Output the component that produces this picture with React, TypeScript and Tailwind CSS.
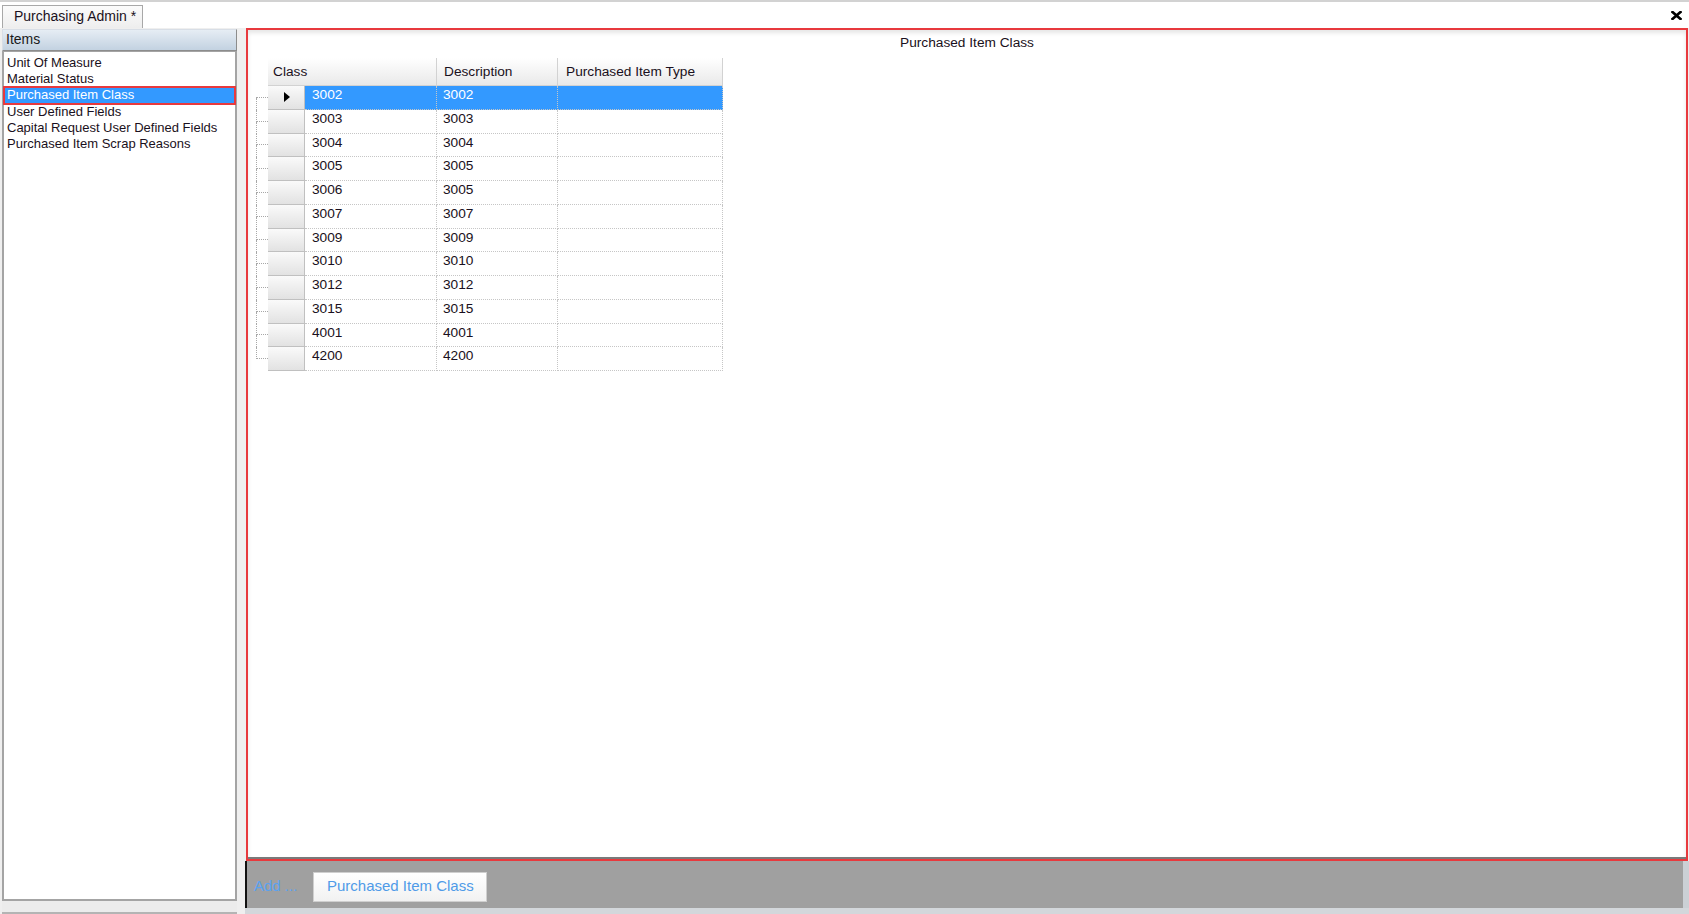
const menuItems = [
  'Unit Of Measure',
  'Material Status',
  'Purchased Item Class',
  'User Defined Fields',
  'Capital Request User Defined Fields',
  'Purchased Item Scrap Reasons',
];

const rows = [
  ['3002', '3002'],
  ['3003', '3003'],
  ['3004', '3004'],
  ['3005', '3005'],
  ['3006', '3005'],
  ['3007', '3007'],
  ['3009', '3009'],
  ['3010', '3010'],
  ['3012', '3012'],
  ['3015', '3015'],
  ['4001', '4001'],
  ['4200', '4200'],
];

function CloseIcon() {
  return (
    <svg width="11" height="9" viewBox="0 0 11 9" className="self-start mt-[9px] mr-[7px]">
      <path d="M1.5 1 L9.5 8 M9.5 1 L1.5 8" stroke="#000" strokeWidth="2.6" strokeLinecap="square" />
    </svg>
  );
}

function ItemList() {
  return (
    <div className="w-[237px] flex flex-col pl-[2px] mt-[1px]">
      <div className="h-[22px] flex items-center pl-[3px] pb-[1px] text-[14px] text-[#1a1a1a] border border-[#8c8c8c] border-t-[#d8dee6] border-l-[#d8dee6] bg-gradient-to-b from-[#e6edf4] to-[#c3d2e1]">
        Items
      </div>
      <ul className="flex-1 bg-white border-2 border-t border-[#a4a4a4] pt-[3px] text-[13px] leading-[16.2px]">
        {menuItems.map((item) =>
          item === 'Purchased Item Class' ? (
            <li
              key={item}
              className="pl-[3px] bg-[#3399ff] text-white outline-2 outline-[#e8393d] -outline-offset-1"
            >
              {item}
            </li>
          ) : (
            <li key={item} className="pl-[3px] text-[#1a1020]">
              {item}
            </li>
          )
        )}
      </ul>
      <div className="h-[13px] bg-[#ececec] border-b-2 border-[#b4b4b4]" />
    </div>
  );
}

function Connector({ first, last }: { first: boolean; last: boolean }) {
  return (
    <div className="w-[12px] flex flex-col">
      <div
        className={
          'h-1/2 border-b border-dotted border-[#a8a8a8] ' +
          (first ? '' : 'border-l')
        }
      />
      <div className={'h-1/2 border-dotted border-[#a8a8a8] ' + (last ? '' : 'border-l')} />
    </div>
  );
}

function Grid() {
  return (
    <div className="flex flex-col pl-[8px] mt-[6px] text-[13.7px]">
      <div className="ml-[12px] flex h-[28px] text-[#1a1020]">
        <div className="w-[169px] flex items-center pl-[5px] pt-[1px] bg-gradient-to-b from-white to-[#e9e9e9] border-r border-b border-[#d2d2d2]">
          Class
        </div>
        <div className="w-[121px] flex items-center pl-[7px] pt-[1px] bg-gradient-to-b from-white to-[#e9e9e9] border-r border-b border-[#d2d2d2]">
          Description
        </div>
        <div className="w-[165px] flex items-center pl-[8px] pt-[1px] bg-gradient-to-b from-white to-[#e9e9e9] border-r border-b border-[#d2d2d2]">
          Purchased Item Type
        </div>
      </div>
      {rows.map(([cls, desc], i) => {
        const selected = i === 0;
        const cell =
          'pt-[1px] leading-[16px] border-r border-b border-dotted border-[#c6c6c6] ' +
          (selected ? 'bg-[#3399ff] text-white' : 'bg-white text-[#1a1020]');
        return (
          <div key={cls} className="flex h-[23.75px]">
            <Connector first={i === 0} last={i === rows.length - 1} />
            <div className="w-[37px] flex items-center justify-center bg-gradient-to-b from-[#fafafa] to-[#e2e2e2] border-b border-r border-[#c0c0c0]">
              {selected && (
                <svg width="6" height="10" viewBox="0 0 6 10" className="ml-[1px]">
                  <path d="M0 0 L6 5 L0 10 Z" fill="#000" />
                </svg>
              )}
            </div>
            <div className={'w-[132px] pl-[7px] ' + cell}>{cls}</div>
            <div className={'w-[121px] pl-[6px] ' + cell}>{desc}</div>
            <div className={'w-[165px] ' + cell} />
          </div>
        );
      })}
    </div>
  );
}

export default function App() {
  return (
    <div className="w-[1689px] h-[914px] flex flex-col bg-[#efefef] overflow-hidden font-['Liberation_Sans',Arial,sans-serif] text-black">
      {/* tab strip */}
      <div className="h-[28px] shrink-0 flex items-end bg-white border-t-2 border-[#d2d2d2] pl-[2px]">
        <div className="h-[23px] w-[141px] pl-[11px] pb-[1px] flex items-center text-[14px] text-[#1a1020] border border-b-0 border-[#a8a8a8] bg-gradient-to-b from-[#fbfbfb] to-[#eeeeee]">
          Purchasing Admin *
        </div>
        <div className="flex-1" />
        <CloseIcon />
      </div>

      <div className="flex flex-1 min-h-0">
        <ItemList />
        <div className="w-[8px]" />

        {/* main area */}
        <div className="flex-1 flex flex-col">
          <div className="h-[833px] ml-[1px] mr-[1px] flex flex-col border-2 border-[#e8393d] bg-white">
            <div className="flex-1 flex flex-col border-b-2 border-[#7a7a7a] shadow-[inset_0_3px_4px_rgba(0,0,0,0.10)]">
              <div className="pt-[4px] leading-[18px] text-center text-[13.7px] text-[#1a1020]">
                Purchased Item Class
              </div>
              <Grid />
            </div>
          </div>
          <div className="flex-1 flex">
            <div className="flex-1 flex items-center pl-[7px] pt-[4px] bg-[#a0a0a0] border-l-2 border-[#111]">
              <span className="text-[15px] text-[#5aa2f0]">Add ...</span>
              <button className="ml-[16px] h-[30px] w-[174px] flex items-center justify-center text-[15px] text-[#4f9be8] bg-gradient-to-b from-white to-[#f1f1f1] border border-[#cfcfcf]">
                Purchased Item Class
              </button>
            </div>
            <div className="w-[6px] bg-[#cbd0d5]" />
          </div>
          <div className="h-[6px] bg-[#d3d7db]" />
        </div>
      </div>
    </div>
  );
}
